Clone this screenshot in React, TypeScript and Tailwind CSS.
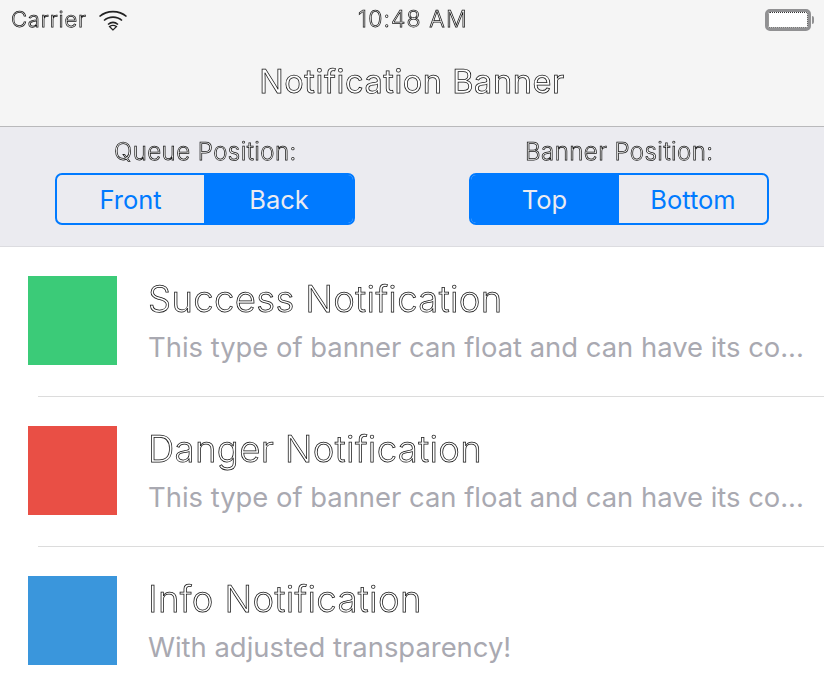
import React from "react";

// hollow text: the layer hint keeps the stroke free of LCD colour fringes
const outlined = "text-white [-webkit-text-stroke:0.75px_#111] [will-change:transform]";

const rows = [
  { title: "Success Notification", text: "This type of banner can float and can have its co...", color: "bg-[#3bcb78]" },
  { title: "Danger Notification", text: "This type of banner can float and can have its co...", color: "bg-[#e94f45]" },
  { title: "Info Notification", text: "With adjusted transparency!", color: "bg-[#3a96dc]" },
];

const Segmented = ({ label, left, right, active }: { label: string; left: string; right: string; active: "left" | "right" }) => (
  <div className="flex w-[300px] flex-col items-center">
    <div className={`h-[27px] text-[24px] leading-[27px] font-light tracking-[0.45px] ${outlined}`}>{label}</div>
    <div className="mt-[8px] flex h-[52px] w-[300px] overflow-hidden rounded-[7px] border-2 border-[#007aff] pt-[2px] text-[25.5px]">
      <div className={`-mt-[2px] flex w-[148px] items-center justify-center border-r border-[#007aff] pt-[2px] ${active === "left" ? "bg-[#007aff] text-[#ebebf1]" : "text-[#007aff]"}`}>{left}</div>
      <div className={`-mt-[2px] flex flex-1 items-center justify-center pt-[2px] ${active === "right" ? "bg-[#007aff] text-[#ebebf1]" : "text-[#007aff]"}`}>{right}</div>
    </div>
  </div>
);

export default function App() {
  return (
    <div className="h-[680px] w-[824px] overflow-hidden bg-white font-['Inter','Liberation_Sans',sans-serif]">
      {/* nav bar */}
      <div className="h-[127px] border-b border-[#b9b9bb] bg-[#f5f5f5]">
        <div className="flex h-[39px] items-center justify-between pl-[11px] pr-[10px]">
          <div className="flex w-[290px] items-center gap-[11px]">
            <span className={`text-[22px] font-light tracking-[0.8px] ${outlined}`}>Carrier</span>
            <svg width="30" height="22" viewBox="0 0 30 22" fill="none" stroke="#222" strokeWidth="1.6">
              <path d="M1.5 7.5C9 1 21 1 28.5 7.5" />
              <path d="M6 11.5C11 7 19 7 24 11.5" />
              <path d="M10 15.5C13 13 17 13 20 15.5" />
              <path d="M15 21l-3.5-3.5c2-1.4 5-1.4 7 0z" fill="#fff" strokeWidth="1.2" />
            </svg>
          </div>
          <span className={`text-[23px] font-light tracking-[1.1px] ${outlined}`}>10:48 AM</span>
          <div className="flex w-[290px] items-center justify-end">
            <div className="h-[22px] w-[46px] rounded-[5px] border-[3px] border-[#919193] bg-white p-0">
              <div className="h-full w-full rounded-[2px] border border-dotted border-[#333]" />
            </div>
            <div className="ml-[1px] h-[8px] w-[2px] rounded-r-sm bg-[#919193]" />
          </div>
        </div>
        <div className={`flex h-[87px] items-start justify-center pt-[23px] text-[32.5px] leading-[40px] tracking-[0.55px] ${outlined}`}>
          Notification Banner
        </div>
      </div>

      {/* queue and banner position */}
      <div className="flex h-[120px] justify-between border-b border-[#dcdce0] bg-[#ebebf0] pl-[55px] pr-[55px] pt-[11px]">
        <Segmented label="Queue Position:" left="Front" right="Back" active="right" />
        <Segmented label="Banner Position:" left="Top" right="Bottom" active="left" />
      </div>

      {/* notification list */}
      {rows.map((row, i) => (
        <div key={row.title} className="relative flex h-[150px] items-start pl-[28px] pt-[29px]">
          <div className={`h-[89px] w-[89px] shrink-0 ${row.color}`} />
          <div className="ml-[31px] min-w-0 flex-1">
            <div className={`text-[36.5px] leading-[46px] font-light tracking-[0.35px] ${outlined}`}>{row.title}</div>
            <div className="mt-[7px] whitespace-nowrap text-[27.4px] leading-[36px] text-[#a9a9b1]">{row.text}</div>
          </div>
          {i < 2 && <div className="absolute bottom-0 left-[38px] right-0 h-px bg-[#dcdcdc]" />}
        </div>
      ))}
    </div>
  );
}
